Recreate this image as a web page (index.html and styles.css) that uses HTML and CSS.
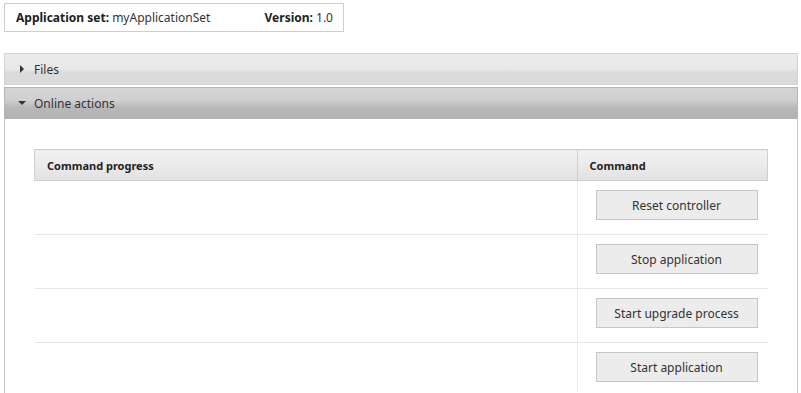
FILE: index.html
```html
<!doctype html>
<html>
  <head>
    <title>Application set</title>
    <link rel="stylesheet" href="styles.css">
  </head>
  <body>
    <div class="info-box">
      <span><b>Application set:</b> myApplicationSet</span>
      <span><b>Version:</b> 1.0</span>
    </div>

    <div class="panel-header">
      <span class="arrow"><span class="arrow-right"></span></span>
      <span>Files</span>
    </div>

    <div class="panel-header open">
      <span class="arrow"><span class="arrow-down"></span></span>
      <span>Online actions</span>
    </div>

    <div class="panel-body">
      <table class="commands">
        <thead>
          <tr>
            <th class="col-progress">Command progress</th>
            <th class="col-command">Command</th>
          </tr>
        </thead>
        <tbody>
          <tr>
            <td></td>
            <td class="cell-command"><button>Reset controller</button></td>
          </tr>
          <tr>
            <td></td>
            <td class="cell-command"><button>Stop application</button></td>
          </tr>
          <tr>
            <td></td>
            <td class="cell-command"><button>Start upgrade process</button></td>
          </tr>
          <tr>
            <td></td>
            <td class="cell-command"><button>Start application</button></td>
          </tr>
        </tbody>
      </table>
    </div>
  </body>
</html>
```

FILE: styles.css
```css
:root {
  --text-color: #333;
  --border-color: #cfcfcf;
  --row-line: #e6e6e6;
}

html {
  overflow: hidden;
}

body {
  margin: 0;
  padding: 3px 3px 0 4px;
  font-family: 'Noto Sans', 'Open Sans', sans-serif;
  font-size: 12px;
  color: var(--text-color);
  background: white;
}

.info-box {
  box-sizing: border-box;
  width: 340px;
  height: 29px;
  border: 1px solid var(--border-color);
  display: flex;
  align-items: center;
  justify-content: space-between;
  padding: 0 10px 0 11px;
  margin-bottom: 21px;
}

.info-box b {
  font-weight: 700;
  color: #222;
}

.panel-header {
  box-sizing: border-box;
  height: 32px;
  display: flex;
  align-items: center;
  gap: 8px;
  padding-left: 13px;
  border: 1px solid #d2d2d2;
  background: linear-gradient(#ebebeb 0%, #e8e8e8 50%, #dcdcdc 60%, #dadada 100%);
  margin-bottom: 2px;
}

.panel-header.open {
  margin-bottom: 0;
  border-color: #b4b4b4;
  background: linear-gradient(#d4d4d4 0%, #d0d0d0 40%, #b8b8b8 65%, #b2b2b2 100%);
}

.arrow {
  width: 8px;
  height: 8px;
  display: flex;
  align-items: center;
  justify-content: center;
}

.arrow-right {
  width: 0;
  height: 0;
  border-top: 4px solid transparent;
  border-bottom: 4px solid transparent;
  border-left: 4px solid #333;
}

.arrow-down {
  width: 0;
  height: 0;
  border-left: 4px solid transparent;
  border-right: 4px solid transparent;
  border-top: 4px solid #333;
}

.panel-body {
  border-left: 1px solid #c8c8c8;
  border-right: 1px solid #c8c8c8;
  padding: 30px 29px 0 29px;
  height: 244px;
  overflow: hidden;
}

.commands {
  width: 100%;
  border-collapse: collapse;
}

.commands th {
  height: 31px;
  box-sizing: border-box;
  text-align: left;
  font-size: 11px;
  font-weight: 700;
  color: #222;
  padding: 0 0 0 12px;
  border: 1px solid var(--border-color);
  background: linear-gradient(#f2f2f2, #e2e2e2);
}

.commands .col-command {
  width: 189px;
}

.commands td {
  padding: 0;
  border-bottom: 1px solid var(--row-line);
}

.commands td.cell-command {
  border-left: 1px dotted #dcdcdc;
  padding: 9px 10px 14px 18px;
}

button {
  display: block;
  box-sizing: border-box;
  width: 162px;
  height: 30px;
  font-family: inherit;
  font-size: 12px;
  color: var(--text-color);
  background: #ececec;
  border: 1px solid #c6c6c6;
  border-radius: 0;
  cursor: pointer;
}

button:hover {
  background: #e2e2e2;
}
```
